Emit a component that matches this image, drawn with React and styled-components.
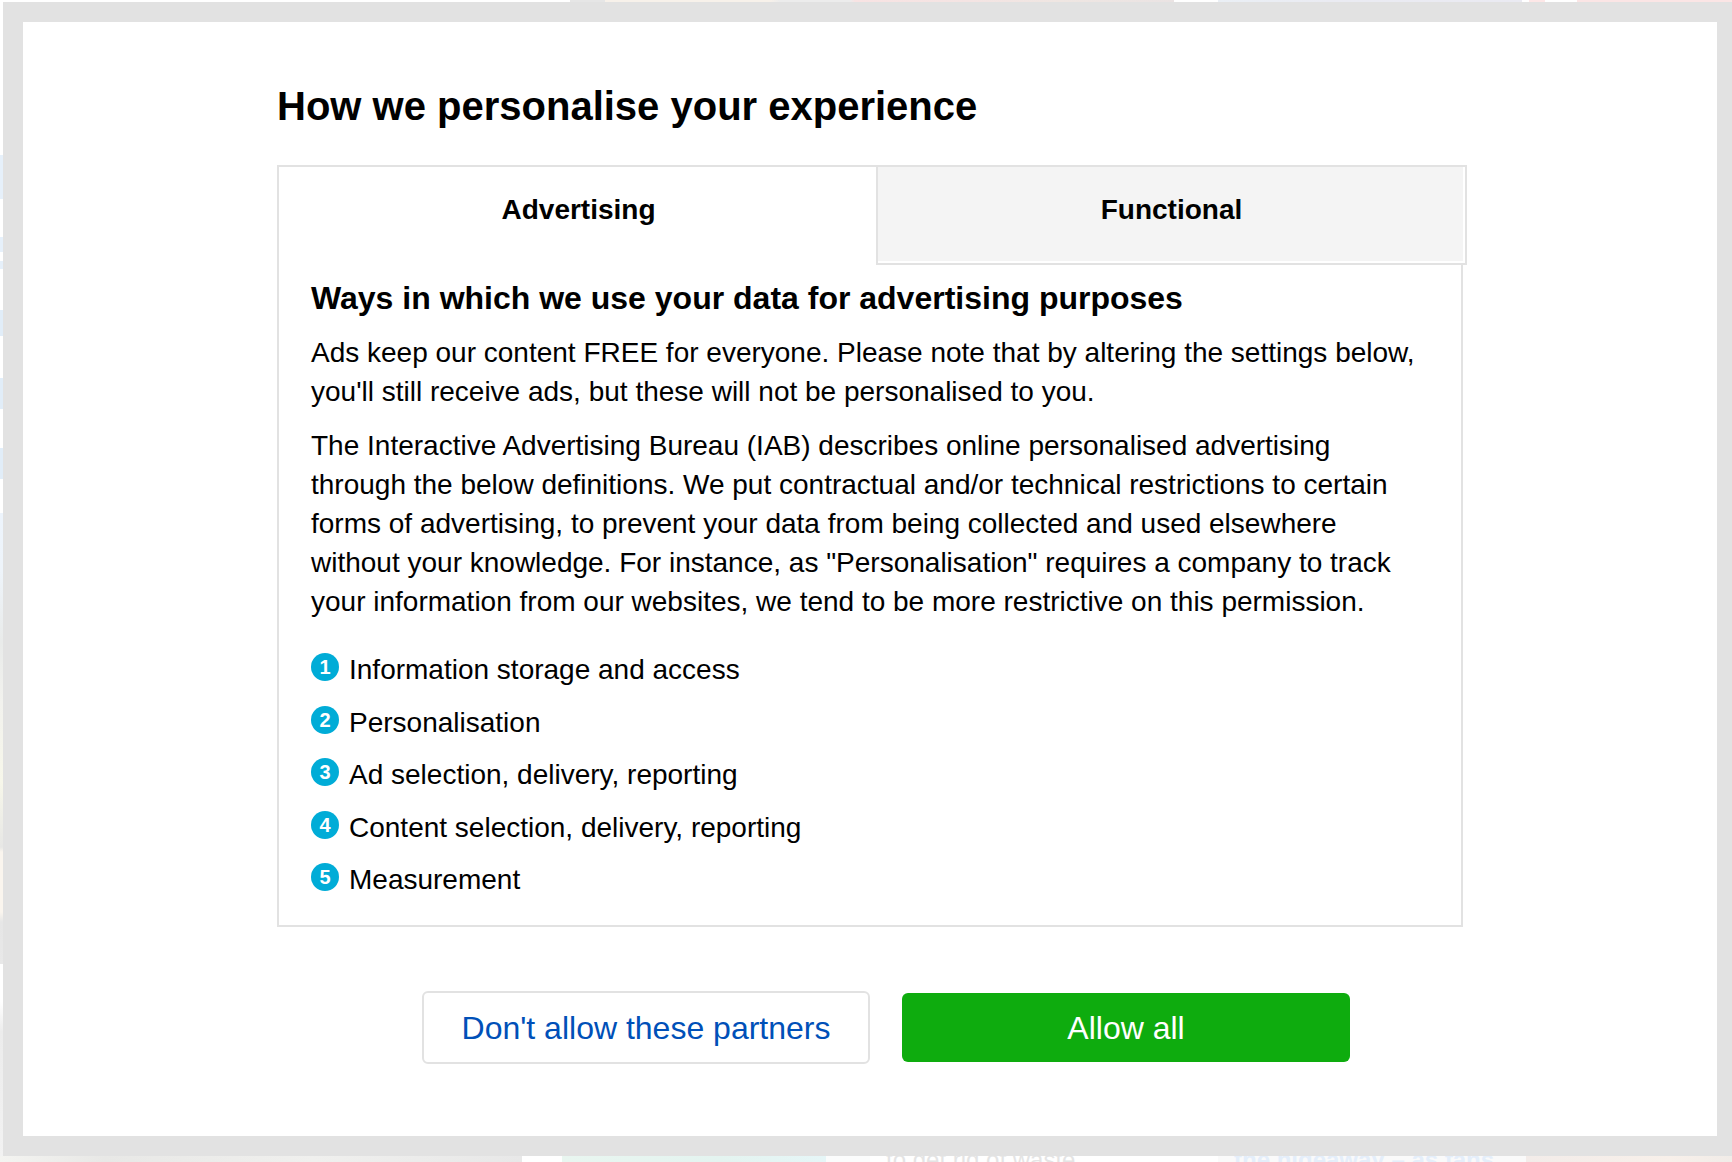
import React, { useState } from "react";
import styled, { createGlobalStyle } from "styled-components";

const line = "#e2e2e2";

const GlobalStyle = createGlobalStyle`
  *, *::before, *::after { box-sizing: border-box; }
  body {
    margin: 0;
    background: #fff;
    color: #000;
    font-family: "Liberation Sans", Arial, Helvetica, sans-serif;
  }
  button { font-family: inherit; cursor: pointer; }
  h1, h2, p, ul { margin: 0; padding: 0; }
`;

const Page = styled.div`
  display: grid;
  grid-template: 2px auto 6px / 3px minmax(0, 1fr);
  min-height: 100vh;
`;

/* Faded slivers of the page that stays behind the dialog */
const TopSliver = styled.div`
  grid-column: 1 / -1;
  background: linear-gradient(
    90deg,
    #fff 570px, #e6e6e6 570px, #e6e6e6 605px, #f7f1ea 605px, #f7f1ea 770px,
    #ececec 780px, #ececec 850px, #f8e3e3 855px, #f4e4e3 970px, #efe6e2 1060px,
    #eae3e3 1174px, #fff 1174px, #fff 1218px, #eaeff5 1218px, #eaebf2 1330px,
    #eaeaf2 1522px, #fff 1522px, #fff 1529px, #fde7e7 1529px, #fde7e7 1545px,
    #fff 1545px, #fff 1577px, #fbe5e5 1577px
  );
`;

const SideSliver = styled.div`
  background: linear-gradient(
    180deg,
    #fff 153px, #e6f0fa 153px, #e6f0fa 197px, #fff 197px, #fff 235px,
    #e6f0fa 235px, #e6f0fa 250px, #fff 250px, #fff 259px, #e6f0fa 259px,
    #e6f0fa 267px, #fff 267px, #fff 308px, #e1edf8 308px, #e1edf8 334px,
    #fff 334px, #fff 376px, #e1edf8 376px, #e1edf8 407px, #fff 407px,
    #fff 446px, #e1edf8 446px, #e1edf8 477px, #fff 477px, #fff 511px,
    #edf4fc 511px, #eef4fa 570px, #e9ebea 640px, #f2f2ee 700px,
    #f7f7ea 780px, #e7e7e5 845px, #faf5ee 850px, #faf5ee 910px,
    #e6e6e6 920px, #e8e8e8 962px, #fff 962px, #fff 1000px, #ececec 1030px,
    #f2f2f2 1154px
  );
`;

const BottomSliver = styled.div`
  grid-column: 1 / -1;
  display: grid;
  grid-template-columns: 522fr 40fr 264fr 44fr 348fr 308fr 206fr;
  height: 6px;
  overflow: hidden;
`;

const Tile = styled.div`
  min-width: 0;
  padding-left: 16px;
  overflow: hidden;
  background: ${(p) => p.$fill || "#fff"};
  color: ${(p) => p.$ink || "#e4e4e4"};
  font-size: 24px;
  font-weight: ${(p) => (p.$ink ? "bold" : "normal")};
  line-height: 8px;
  white-space: nowrap;
`;

const Dialog = styled.main`
  padding: 56px 20px 65px;
  border: 20px solid ${line};
  border-right-width: 15px;
  background: #fff;
`;

const Content = styled.div`
  width: 100%;
  max-width: 1186px;
  margin: 0 auto;
`;

const Title = styled.h1`
  margin-bottom: 30px;
  font-size: 40px;
  line-height: 57px;
`;

const Tabs = styled.div`
  display: grid;
  grid-template-columns: 599fr 591fr;
  margin-right: -4px;
`;

const Tab = styled.button`
  height: 100px;
  padding: ${(p) => (p.$active ? "0 0 14px 2px" : "0 0 12px")};
  border: 0 solid ${line};
  border-width: ${(p) => (p.$active ? "2px 0 0 2px" : "2px")};
  background: ${(p) => (p.$active ? "#fff" : "#f4f4f4")};
  box-shadow: ${(p) => (p.$active ? "none" : "inset -2px -2px 0 #fff")};
  color: #000;
  font-size: 28px;
  font-weight: bold;
  line-height: 39px;
`;

const Panel = styled.section`
  margin-top: -4px;
  padding: 15px 32px 26px;
  border: 2px solid ${line};
  border-top: 0;
`;

const PanelTitle = styled.h2`
  margin-bottom: 12px;
  font-size: 32px;
  line-height: 45px;
`;

const Text = styled.p`
  margin-bottom: 15px;
  font-size: 28px;
  line-height: 39px;
`;

const PurposeList = styled.ul`
  display: flex;
  flex-direction: column;
  justify-content: space-between;
  min-height: 249px;
  margin-top: 29px;
  list-style: none;
`;

const Purpose = styled.li`
  display: flex;
  gap: 10px;
  font-size: 28px;
  line-height: 39px;
`;

const Badge = styled.span`
  flex: none;
  width: 28px;
  height: 28px;
  margin-top: 3px;
  border-radius: 50%;
  background: #00acd7;
  color: #fff;
  font-size: 20px;
  font-weight: bold;
  line-height: 29px;
  text-align: center;
`;

const Actions = styled.div`
  display: flex;
  align-items: center;
  justify-content: center;
  gap: 32px;
  margin-top: 64px;
  padding-left: 32px;
`;

const Button = styled.button`
  width: 448px;
  height: ${(p) => (p.$primary ? "69px" : "73px")};
  padding: 2px 0 0;
  border: ${(p) => (p.$primary ? "0" : `2px solid ${line}`)};
  border-radius: 6px;
  background: ${(p) => (p.$primary ? "#0eac0e" : "#fff")};
  color: ${(p) => (p.$primary ? "#fff" : "#0050b8")};
  font-size: 32px;
`;

const purposes = [
  "Information storage and access",
  "Personalisation",
  "Ad selection, delivery, reporting",
  "Content selection, delivery, reporting",
  "Measurement",
];

export default function App() {
  const [tab, setTab] = useState("Advertising");
  return (
    <Page>
      <GlobalStyle />
      <TopSliver />
      <SideSliver />
      <Dialog>
        <Content>
          <Title>How we personalise your experience</Title>
          <Tabs role="tablist">
            {["Advertising", "Functional"].map((name) => (
              <Tab
                key={name}
                role="tab"
                aria-selected={tab === name}
                $active={tab === name}
                onClick={() => setTab(name)}
              >
                {name}
              </Tab>
            ))}
          </Tabs>
          <Panel role="tabpanel">
            <PanelTitle>Ways in which we use your data for advertising purposes</PanelTitle>
            <Text>
              Ads keep our content FREE for everyone. Please note that by altering the settings
              below, you'll still receive ads, but these will not be personalised to you.
            </Text>
            <Text>
              The Interactive Advertising Bureau (IAB) describes online personalised advertising
              through the below definitions. We put contractual and/or technical restrictions to
              certain forms of advertising, to prevent your data from being collected and used
              elsewhere without your knowledge. For instance, as "Personalisation" requires a
              company to track your information from our websites, we tend to be more restrictive
              on this permission.
            </Text>
            <PurposeList>
              {purposes.map((label, i) => (
                <Purpose key={label}>
                  <Badge>{i + 1}</Badge>
                  {label}
                </Purpose>
              ))}
            </PurposeList>
          </Panel>
          <Actions>
            <Button>Don't allow these partners</Button>
            <Button $primary>Allow all</Button>
          </Actions>
        </Content>
      </Dialog>
      <BottomSliver>
        <Tile $fill="linear-gradient(90deg, #f4f4f1, #e8e8e6 20%, #f0f0ee 60%, #e8e8e8)" />
        <Tile />
        <Tile $fill="linear-gradient(90deg, #e9f6f0, #e4f4f0 60%, #e6f6f7)" />
        <Tile $fill="#fbfcfc" />
        <Tile>to get rid of waste</Tile>
        <Tile $fill="#fafafa" $ink="#e4eefa">the hideaway – as fans</Tile>
        <Tile $fill="linear-gradient(90deg, #f3ece9, #f8f0ea 70%, #f1ece8)" />
      </BottomSliver>
    </Page>
  );
}
